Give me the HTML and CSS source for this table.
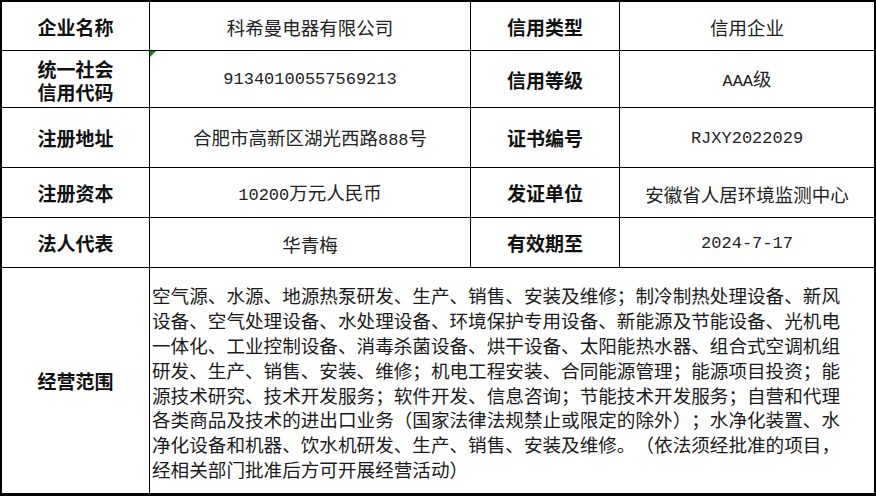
FILE: index.html
```html
<!DOCTYPE html>
<html lang="zh-CN">
<head>
<meta charset="utf-8">
<title>企业信用信息</title>
<link rel="stylesheet" href="styles.css">
</head>
<body>
<div class="sheet">
  <div class="cell label">企业名称</div>
  <div class="cell value">科希曼电器有限公司</div>
  <div class="cell label">信用类型</div>
  <div class="cell value last-col">信用企业</div>

  <div class="cell label two-line"><span class="lbl-line">统一社会</span><span class="lbl-line">信用代码</span></div>
  <div class="cell value flagged"><span class="flag"></span><span class="num">91340100557569213</span></div>
  <div class="cell label">信用等级</div>
  <div class="cell value last-col"><span><span class="num">AAA</span>级</span></div>

  <div class="cell label">注册地址</div>
  <div class="cell value"><span>合肥市高新区湖光西路<span class="num">888</span>号</span></div>
  <div class="cell label">证书编号</div>
  <div class="cell value last-col"><span class="num">RJXY2022029</span></div>

  <div class="cell label">注册资本</div>
  <div class="cell value"><span><span class="num">10200</span>万元人民币</span></div>
  <div class="cell label">发证单位</div>
  <div class="cell value last-col">安徽省人居环境监测中心</div>

  <div class="cell label">法人代表</div>
  <div class="cell value">华青梅</div>
  <div class="cell label">有效期至</div>
  <div class="cell value last-col"><span class="num">2024-7-17</span></div>

  <div class="cell label last-row">经营范围</div>
  <div class="cell scope last-row last-col">
    <div class="scope-text">
      <span class="line">空气源、水源、地源热泵研发、生产、销售、安装及维修；制冷制热处理设备、新风</span>
      <span class="line">设备、空气处理设备、水处理设备、环境保护专用设备、新能源及节能设备、光机电</span>
      <span class="line">一体化、工业控制设备、消毒杀菌设备、烘干设备、太阳能热水器、组合式空调机组</span>
      <span class="line">研发、生产、销售、安装、维修；机电工程安装、合同能源管理；能源项目投资；能</span>
      <span class="line">源技术研究、技术开发服务；软件开发、信息咨询；节能技术开发服务；自营和代理</span>
      <span class="line">各类商品及技术的进出口业务（国家法律法规禁止或限定的除外）；水净化装置、水</span>
      <span class="line">净化设备和机器、饮水机研发、生产、销售、安装及维修。（依法须经批准的项目，</span>
      <span class="line">经相关部门批准后方可开展经营活动）</span>
    </div>
  </div>
</div>
</body>
</html>
```
FILE: styles.css
```css
html, body {
  margin: 0;
  padding: 0;
  background: #ffffff;
}

.sheet {
  width: 876px;
  height: 496px;
  box-sizing: border-box;
  border: 2px solid #000;
  border-bottom-width: 3px;
  display: grid;
  grid-template-columns: 148px 321px 149px 254px;
  grid-template-rows: 49px 57px 60px 50px 50px 225px;
  font-family: "Noto Sans CJK SC", sans-serif;
  text-spacing-trim: space-all;
}

.cell {
  box-sizing: border-box;
  border-right: 1px solid #000;
  border-bottom: 1px solid #000;
  display: flex;
  align-items: center;
  justify-content: center;
  text-align: center;
}

.last-col {
  border-right: none;
}

.last-row {
  border-bottom: none;
}

.label {
  font-family: "Noto Sans CJK SC", sans-serif;
  font-weight: 700;
  font-size: 19px;
  color: #111;
  line-height: 23px;
}

.two-line {
  flex-direction: column;
  padding-top: 2px;
}

.lbl-line {
  display: block;
  height: 23px;
}

.value {
  font-family: "Noto Sans CJK SC", sans-serif;
  font-size: 18.5px;
  color: #222;
  line-height: 24px;
  padding-top: 2px;
}

.num {
  font-family: "Liberation Mono", monospace;
  font-size: 17px;
}

.flagged {
  position: relative;
}

.flag {
  position: absolute;
  left: 0;
  top: 0;
  width: 0;
  height: 0;
  border-top: 6px solid #0d8a1a;
  border-right: 6px solid transparent;
}

.scope {
  grid-column: 2 / 5;
  justify-content: flex-start;
  text-align: left;
  padding: 4px 0 0 2px;
}

.scope-text {
  font-family: "Noto Sans CJK SC", sans-serif;
  font-size: 18.6px;
  line-height: 24.9px;
  color: #1a1a1a;
}

.line {
  display: block;
  white-space: nowrap;
}
```
